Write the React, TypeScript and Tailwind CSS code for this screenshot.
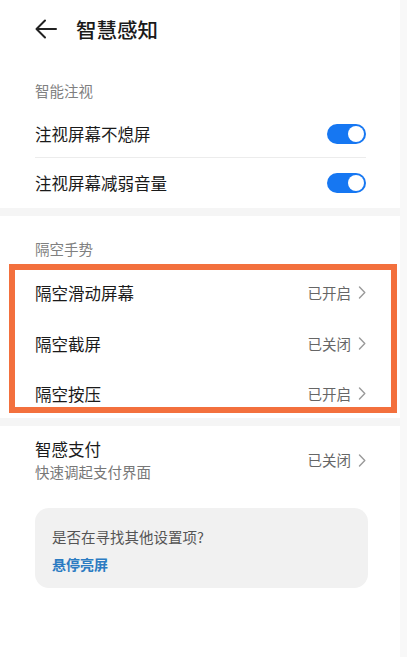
import React from 'react';

const font = { fontFamily: '"Noto Sans CJK SC", "Noto Sans", sans-serif' };

function BackArrow() {
  return (
    <svg width="22" height="20" viewBox="0 0 22 20" fill="none" stroke="#222" strokeWidth="2" strokeLinecap="round" strokeLinejoin="round">
      <path d="M21 10H2" />
      <path d="M10 1.5L1.5 10L10 18.5" />
    </svg>
  );
}

function Chevron() {
  return (
    <svg width="8" height="13" viewBox="0 0 8 13" fill="none" stroke="#9a9a9a" strokeWidth="1.4" strokeLinecap="round" strokeLinejoin="round">
      <path d="M1.5 1L6.8 6.5L1.5 12" />
    </svg>
  );
}

function Toggle() {
  return (
    <div className="w-[39px] h-[20px] rounded-full bg-[#1677f2] flex items-center justify-end pr-[2px]">
      <div className="w-[16px] h-[16px] rounded-full bg-white" />
    </div>
  );
}

function SwitchRow({ label, height }: { label: string; height: string }) {
  return (
    <div className={`flex items-center justify-between ${height}`}>
      <span className="text-[16.5px] leading-[22px] text-[#1a1a1a]">{label}</span>
      <Toggle />
    </div>
  );
}

function LinkRow({ label, value, height }: { label: string; value: string; height: string }) {
  return (
    <div className={`flex items-center justify-between ${height}`}>
      <span className="text-[16.5px] leading-[22px] text-[#1a1a1a]">{label}</span>
      <span className="flex items-center gap-[7px]">
        <span className="text-[14.5px] leading-[20px] text-[#666]">{value}</span>
        <Chevron />
      </span>
    </div>
  );
}

export default function App() {
  return (
    <div className="flex min-h-screen bg-white" style={font}>
      <div className="w-[400px] flex flex-col">
        {/* Header */}
        <div className="h-[58px] flex items-center pl-[35px] gap-[19px]">
          <BackArrow />
          <h1 className="text-[20.5px] leading-[28px] font-medium text-[#1a1a1a]">智慧感知</h1>
        </div>

        {/* 智能注视 */}
        <div className="pl-[35px] pr-[34px]">
          <div className="h-[52px] pt-[23px] text-[14.5px] leading-[20px] text-[#808080]">智能注视</div>
          <SwitchRow label="注视屏幕不熄屏" height="h-[47px]" />
          <div className="h-px bg-[#ececec]" />
          <SwitchRow label="注视屏幕减弱音量" height="h-[50px]" />
        </div>

        <div className="h-[8px] bg-[#f5f5f5]" />

        {/* 隔空手势 */}
        <div className="pl-[35px] pr-[34px] h-[51px] pt-[23px] text-[14.5px] leading-[20px] text-[#808080]">隔空手势</div>
        <div className="relative pl-[35px] pr-[34px]">
          <LinkRow label="隔空滑动屏幕" value="已开启" height="h-[51px]" />
          <LinkRow label="隔空截屏" value="已关闭" height="h-[51px]" />
          <LinkRow label="隔空按压" value="已开启" height="h-[49px]" />
          {/* highlight frame */}
          <div className="absolute left-[9px] right-[3px] top-[-3px] bottom-[5px] border-[6px] border-[#f3703d] pointer-events-none" />
        </div>

        <div className="h-[8px] bg-[#f5f5f5]" />

        {/* 智感支付 */}
        <div className="pl-[35px] pr-[34px] pt-[12px] flex items-center justify-between">
          <div className="flex flex-col">
            <span className="text-[16.5px] leading-[22px] text-[#1a1a1a]">智感支付</span>
            <span className="text-[14.5px] leading-[20px] text-[#777] mt-[2px]">快速调起支付界面</span>
          </div>
          <span className="flex items-center gap-[7px]">
            <span className="text-[14.5px] leading-[20px] text-[#666]">已关闭</span>
            <Chevron />
          </span>
        </div>

        {/* Suggestion card */}
        <div className="ml-[35px] mr-[32px] mt-[26px] h-[80px] rounded-[14px] bg-[#f1f1f1] px-[17px] pt-[19px] flex flex-col gap-[7px]">
          <span className="text-[14.5px] leading-[20px] text-[#555]">是否在寻找其他设置项?</span>
          <span className="text-[14px] leading-[20px] font-bold text-[#2b7bc2]">悬停亮屏</span>
        </div>
      </div>
      <div className="w-[7px] bg-[#f8f8f8]" />
    </div>
  );
}
